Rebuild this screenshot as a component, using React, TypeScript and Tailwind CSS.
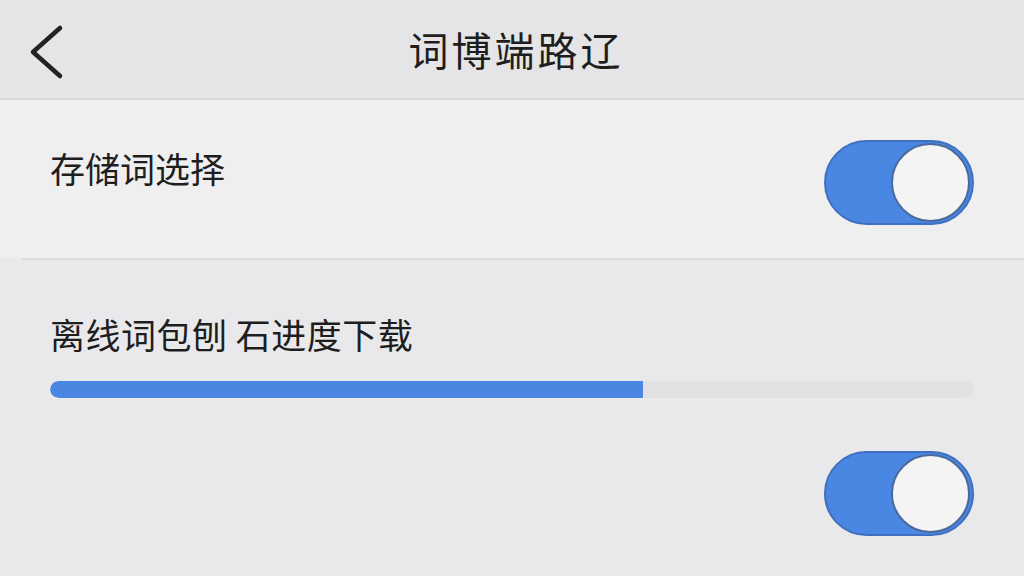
import { useState } from "react";

const cjk = { fontFamily: '"Noto Sans CJK SC", "Noto Sans", sans-serif' };

const Toggle = ({ on, onClick }: { on: boolean; onClick: () => void }) => (
  <button
    onClick={onClick}
    className={`flex h-[85px] w-[150px] shrink-0 items-center rounded-full border-2 border-[#3f6fc0] p-[2px] ${
      on ? "justify-end bg-[#4a87e2]" : "justify-start bg-[#d6d6d8]"
    }`}
  >
    <span className="h-[79px] w-[79px] rounded-full border-2 border-[#4a6a9c] bg-[#f4f4f5]" />
  </button>
);

export default function App() {
  const [store, setStore] = useState(true);
  const [auto, setAuto] = useState(true);
  const progress = 64.2;

  return (
    <div className="flex h-[576px] w-[1024px] flex-col overflow-hidden bg-[#e9e9eb] text-[#1e1e1e]" style={cjk}>
      {/* Header */}
      <div className="relative flex h-[100px] items-center justify-center border-b-2 border-[#d9d9db] bg-[#e5e5e7]">
        <button className="absolute left-[26px] top-[24px]">
          <svg width="40" height="56" viewBox="0 0 40 56" fill="none">
            <path d="M34 4 L7 28 L34 52" stroke="#222" strokeWidth="4.5" strokeLinecap="round" strokeLinejoin="round" />
          </svg>
        </button>
        <h1 className="pl-[8px] text-[40px] leading-none tracking-[3px]">词博端路辽</h1>
      </div>

      {/* Storage row */}
      <div className="flex h-[158px] items-start justify-between bg-[#efeff0] px-[50px] pt-[40px]">
        <span className="mt-[10px] text-[35px] leading-none">存储词选择</span>
        <Toggle on={store} onClick={() => setStore(!store)} />
      </div>
      <div className="ml-[22px] h-[2px] bg-[#dcdcde]" />

      {/* Offline package */}
      <div className="flex flex-col px-[50px] pt-[56px]">
        <span className="text-[35px] leading-none tracking-[0.5px]">离线词包刨 石进度下载</span>
        <div className="mt-[30px] h-[17px] w-full overflow-hidden rounded-full bg-[#e1e1e3]">
          <div className="h-full rounded-l-full bg-[#4a87e2]" style={{ width: `${progress}%` }} />
        </div>
        <div className="mt-[53px] flex justify-end">
          <Toggle on={auto} onClick={() => setAuto(!auto)} />
        </div>
      </div>
    </div>
  );
}
